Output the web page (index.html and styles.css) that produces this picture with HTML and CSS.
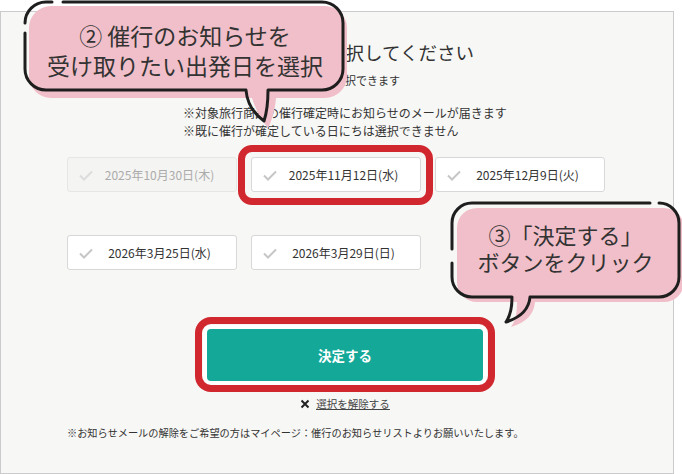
FILE: index.html
```html
<!DOCTYPE html>
<html lang="ja">
<head>
<meta charset="utf-8">
<title>催行のお知らせ</title>
<link rel="stylesheet" href="styles.css">
</head>
<body>
<div class="stage">
  <div class="panel">
    <h1 class="title">ご希望日程を選択してください</h1>
    <p class="sub">複数日を選択できます</p>
    <div class="notes-wrap">
      <div class="notes">
        <p>※対象旅行商品の催行確定時にお知らせのメールが届きます</p>
        <p>※既に催行が確定している日にちは選択できません</p>
      </div>
    </div>
    <div class="dates">
      <button class="date is-disabled"><svg class="check" viewBox="0 0 14 11"><polyline points="1,5.5 5,9.5 13,1.5"/></svg>2025年10月30日(木)</button>
      <button class="date"><svg class="check" viewBox="0 0 14 11"><polyline points="1,5.5 5,9.5 13,1.5"/></svg>2025年11月12日(水)</button>
      <button class="date"><svg class="check" viewBox="0 0 14 11"><polyline points="1,5.5 5,9.5 13,1.5"/></svg>2025年12月9日(火)</button>
      <button class="date"><svg class="check" viewBox="0 0 14 11"><polyline points="1,5.5 5,9.5 13,1.5"/></svg>2026年3月25日(水)</button>
      <button class="date"><svg class="check" viewBox="0 0 14 11"><polyline points="1,5.5 5,9.5 13,1.5"/></svg>2026年3月29日(日)</button>
    </div>
    <div class="actions">
      <button class="submit">決定する</button>
    </div>
    <div class="clear-wrap">
      <a class="clear" href="#"><svg class="x" viewBox="0 0 10 10"><path d="M1.5 1.5 L8.5 8.5 M8.5 1.5 L1.5 8.5"/></svg><span>選択を解除する</span></a>
    </div>
    <p class="foot-note">※お知らせメールの解除をご希望の方はマイページ：催行のお知らせリストよりお願いいたします。</p>
  </div>

  <div class="hl hl-date"></div>
  <div class="hl hl-submit"></div>

  <svg class="bubble bubble-1" viewBox="0 0 360 135" width="360" height="135">
    <path class="pink" d="M51,6 H325 A22,22 0 0 1 347,28 V76 A22,22 0 0 1 325,98 H276 C275,110 272,120 268,128 C262,121 256,111 252,98 H51 A22,22 0 0 1 29,76 V28 A22,22 0 0 1 51,6 Z"/>
    <path class="ink" d="M25,23 A21,21 0 0 1 46,2 L52,2 M63,2 L322,2 A21,21 0 0 1 343,23 L343,69 A21,21 0 0 1 322,90 L268,90 M25,33 L25,69 A21,21 0 0 0 46,90 L246,90 M246,90 C247,103 253,113 264,121 M268,90 C268,102 267,112 264,121"/>
  </svg>
  <div class="btext btext-1">② 催行のお知らせを<br>受け取りたい出発日を選択</div>

  <svg class="bubble bubble-3" viewBox="440 195 250 140" width="250" height="140">
    <path class="pink" d="M477,208 H664 A20,20 0 0 1 684,228 V282 A20,20 0 0 1 664,302 H535 C534,314 527,322 511,327 C516,320 517,312 517,302 H477 A20,20 0 0 1 457,282 V228 A20,20 0 0 1 477,208 Z"/>
    <path class="ink" d="M452,223 A20,20 0 0 1 472,203 L650,203 M659,203 A20,20 0 0 1 679,223 L679,277 A20,20 0 0 1 659,297 L530,297 M530,297 C529,309 522,317 506,322 M512,297 C512,307 511,315 506,322 M512,297 L472,297 A20,20 0 0 1 452,277 L452,263 M452,249 L452,223"/>
  </svg>
  <div class="btext btext-3">③「決定する」<br>ボタンをクリック</div>
</div>
</body>
</html>
```

FILE: styles.css
```css
html, body {
  margin: 0;
  padding: 0;
  background: #ffffff;
}

body {
  font-family: "Noto Sans CJK JP", "Noto Sans", sans-serif;
  color: #333333;
}

.stage {
  position: relative;
  width: 682px;
  height: 474px;
  overflow: hidden;
}

.panel {
  margin-top: 11px;
  width: 674px;
  height: 463px;
  box-sizing: border-box;
  border: 1px solid #cbcbcb;
  background: #f7f7f5;
  padding: 0 68px 0 66px;
  display: flex;
  flex-direction: column;
}

.title {
  margin: 26px 0 0;
  padding-left: 18px;
  font-size: 18.5px;
  line-height: 28px;
  font-weight: 400;
  text-align: center;
  color: #333;
}

.sub {
  margin: 5px 0 0;
  padding-left: 18px;
  font-size: 11px;
  line-height: 18px;
  text-align: center;
}

.notes-wrap {
  margin-top: 15px;
  padding-left: 18px;
  display: flex;
  justify-content: center;
}

.notes p {
  margin: 0;
  font-size: 12px;
  line-height: 18px;
}

.dates {
  margin-top: 17px;
  display: grid;
  grid-template-columns: repeat(3, 170px);
  grid-auto-rows: 35px;
  column-gap: 14px;
  row-gap: 43px;
}

.date {
  position: relative;
  box-sizing: border-box;
  margin: 0;
  padding: 0 0 0 15px;
  background: #ffffff;
  border: 1px solid #d8d8d8;
  border-radius: 3px;
  font-family: inherit;
  font-size: 12px;
  color: #333;
  display: flex;
  align-items: center;
  justify-content: center;
}

.date .check {
  position: absolute;
  left: 11px;
  top: 12px;
  width: 14px;
  height: 11px;
  fill: none;
  stroke: #c6c6c6;
  stroke-width: 2;
}

.date.is-disabled {
  background: #f4f4f2;
  border-color: #e6e6e4;
  color: #ababab;
}

.date.is-disabled .check {
  stroke: #dcdcdc;
}

.actions {
  margin-top: 59px;
  padding-left: 18px;
  display: flex;
  justify-content: center;
}

.submit {
  width: 276px;
  height: 52px;
  margin: 0;
  border: none;
  border-radius: 4px;
  background: #14a898;
  color: #ffffff;
  font-family: inherit;
  font-size: 13.5px;
  font-weight: 700;
  box-shadow: 0 0 0 4px #ffffff;
}

.clear-wrap {
  margin-top: 15px;
  padding-left: 18px;
  display: flex;
  justify-content: center;
}

.clear {
  display: flex;
  align-items: center;
  gap: 6px;
  font-size: 10.5px;
  line-height: 16px;
  color: #444;
}

.clear span {
  text-decoration: underline;
}

.clear .x {
  width: 10px;
  height: 10px;
  fill: none;
  stroke: #222;
  stroke-width: 2;
}

.foot-note {
  margin: 13px 0 0;
  font-size: 10.2px;
  line-height: 16px;
  color: #333;
}

/* annotations */
.hl {
  position: absolute;
  box-sizing: border-box;
  border: 7px solid #d0282e;
}

.hl-date {
  left: 238px;
  top: 145px;
  width: 195px;
  height: 60px;
  border-radius: 14px;
}

.hl-submit {
  left: 195px;
  top: 317px;
  width: 300px;
  height: 75px;
  border-radius: 16px;
}

.bubble {
  position: absolute;
  overflow: visible;
}

.bubble-1 {
  left: 0;
  top: 0;
}

.bubble-3 {
  left: 440px;
  top: 195px;
}

.bubble .pink {
  fill: #f1bfc9;
}

.bubble .ink {
  fill: none;
  stroke: #1e1e1e;
  stroke-width: 3;
  stroke-linecap: round;
}

.btext {
  position: absolute;
  text-align: center;
  font-weight: 400;
  color: #333;
}

.btext-1 {
  left: 25px;
  top: 20px;
  width: 320px;
  font-size: 23px;
  line-height: 30px;
}

.btext-3 {
  left: 452px;
  top: 221px;
  width: 227px;
  font-size: 22px;
  line-height: 27px;
}
```
